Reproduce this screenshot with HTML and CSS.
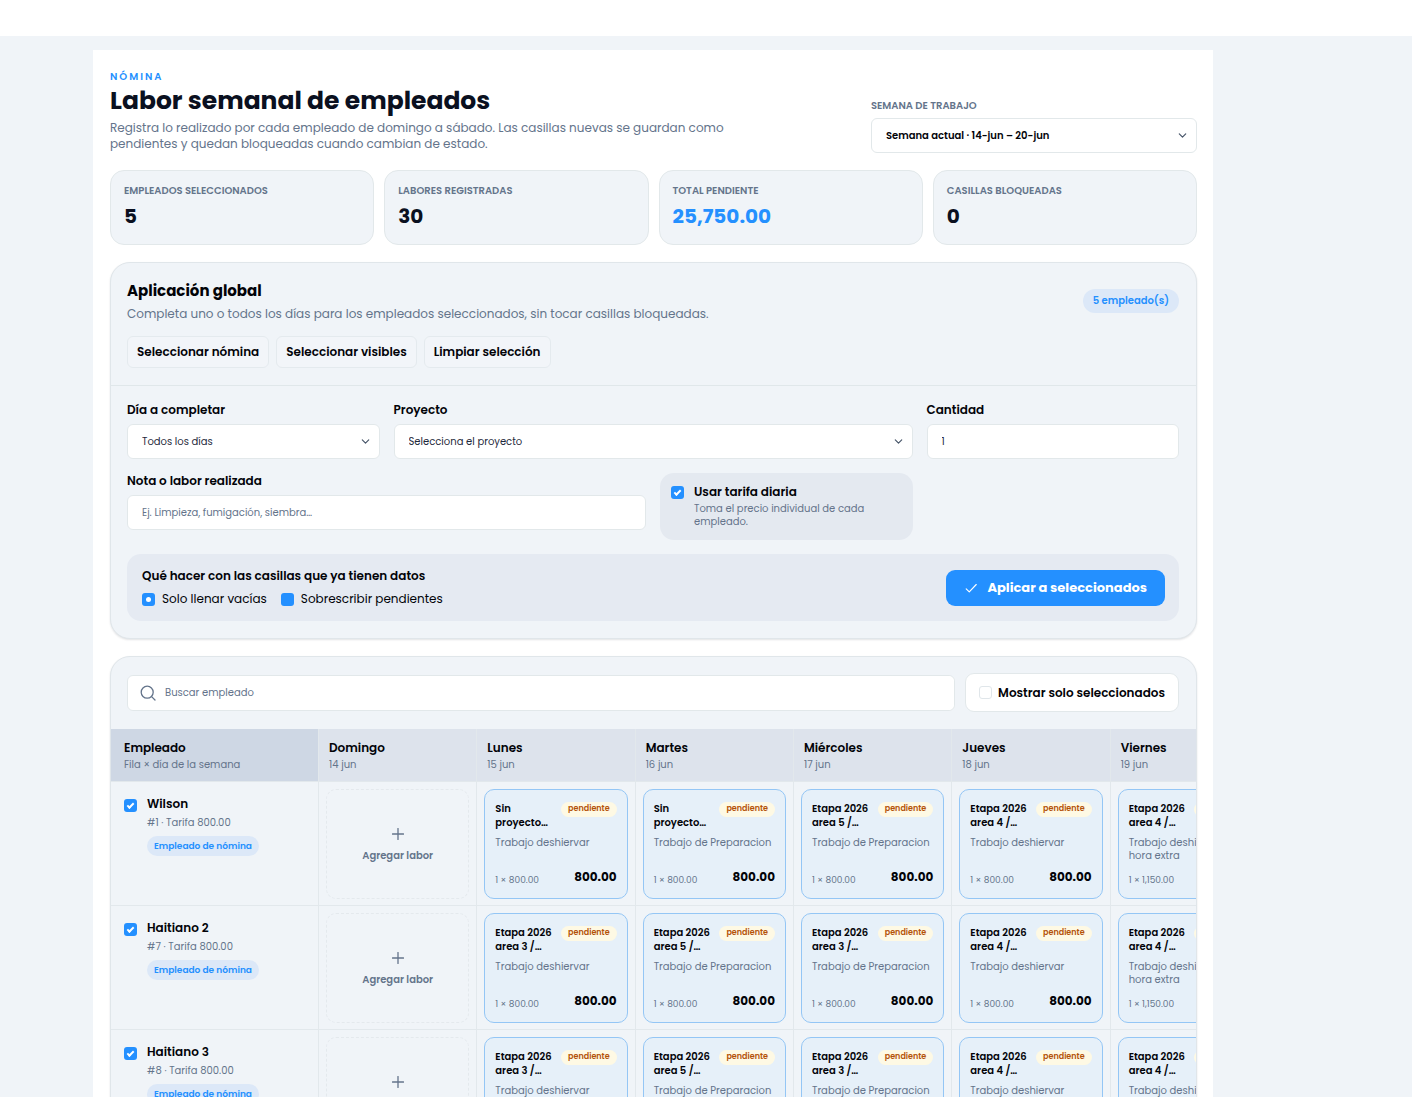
FILE: index.html
```html
<!DOCTYPE html>
<html lang="es">
<head>
    <meta charset="UTF-8" />
    <meta name="viewport" content="width=device-width, initial-scale=1">
    <title>Labor semanal de empleados</title>
    <link rel="stylesheet" href="styles.css">
</head>
<body>
    <svg class="sprite" aria-hidden="true">
        <symbol id="chevron" viewBox="0 0 12 12"><path d="M2.5 4.2 6 7.7l3.5-3.5"/></symbol>
        <symbol id="check" viewBox="0 0 16 16"><path d="M2.5 9 6 12.5l8-8.5"/></symbol>
        <symbol id="search" viewBox="0 0 16 16"><circle cx="7.2" cy="7.2" r="6"/><path d="m11.6 11.6 3.4 3.4"/></symbol>
        <symbol id="plus" viewBox="0 0 12 12"><path d="M6 .5v11M.5 6h11"/></symbol>
    </svg>
    <header class="topbar"></header>
    <main class="page">
        <div class="panel">
            <div class="head">
                <div class="head-text">
                    <p class="eyebrow">NÓMINA</p>
                    <h1>Labor semanal de empleados</h1>
                    <p class="lead">Registra lo realizado por cada empleado de domingo a sábado. Las casillas nuevas se guardan como pendientes y quedan bloqueadas cuando cambian de estado.</p>
                </div>
                <div class="week">
                    <label class="caption" for="semana">SEMANA DE TRABAJO</label>
                    <div class="select">
                        <select id="semana" class="strong"><option>Semana actual · 14-jun – 20-jun</option></select>
                        <svg class="icon chevron"><use href="#chevron"/></svg>
                    </div>
                </div>
            </div>

            <div class="stats">
                <div class="stat"><p class="caption">EMPLEADOS SELECCIONADOS</p><p class="value">5</p></div>
                <div class="stat"><p class="caption">LABORES REGISTRADAS</p><p class="value">30</p></div>
                <div class="stat"><p class="caption">TOTAL PENDIENTE</p><p class="value blue">25,750.00</p></div>
                <div class="stat"><p class="caption">CASILLAS BLOQUEADAS</p><p class="value">0</p></div>
            </div>

            <!-- aplicación global -->
            <section class="box">
                <div class="box-head">
                    <div>
                        <h2>Aplicación global</h2>
                        <p class="sub">Completa uno o todos los días para los empleados seleccionados, sin tocar casillas bloqueadas.</p>
                        <div class="actions">
                            <button type="button" class="btn">Seleccionar nómina</button>
                            <button type="button" class="btn">Seleccionar visibles</button>
                            <button type="button" class="btn">Limpiar selección</button>
                        </div>
                    </div>
                    <span class="count">5 empleado(s)</span>
                </div>
                <form class="form">
                    <div class="field">
                        <label for="dia">Día a completar</label>
                        <div class="select">
                            <select id="dia"><option>Todos los días</option></select>
                            <svg class="icon chevron"><use href="#chevron"/></svg>
                        </div>
                    </div>
                    <div class="field wide">
                        <label for="proyecto">Proyecto</label>
                        <div class="select">
                            <select id="proyecto"><option>Selecciona el proyecto</option></select>
                            <svg class="icon chevron"><use href="#chevron"/></svg>
                        </div>
                    </div>
                    <div class="field">
                        <label for="cantidad">Cantidad</label>
                        <input type="text" id="cantidad" inputmode="decimal" value="1">
                    </div>
                    <div class="field wide">
                        <label for="nota">Nota o labor realizada</label>
                        <input type="text" id="nota" placeholder="Ej. Limpieza, fumigación, siembra…">
                    </div>
                    <label class="rate">
                        <input type="checkbox" checked>
                        <span>
                            <b>Usar tarifa diaria</b>
                            <small>Toma el precio individual de cada empleado.</small>
                        </span>
                    </label>
                    <div class="apply">
                        <fieldset>
                            <legend>Qué hacer con las casillas que ya tienen datos</legend>
                            <label><input type="radio" name="modo" checked>Solo llenar vacías</label>
                            <label><input type="radio" name="modo">Sobrescribir pendientes</label>
                        </fieldset>
                        <button type="button" class="primary"><svg class="icon"><use href="#check"/></svg>Aplicar a seleccionados</button>
                    </div>
                </form>
            </section>

            <!-- tabla semanal -->
            <section class="box">
                <div class="toolbar">
                    <div class="search">
                        <svg class="icon"><use href="#search"/></svg>
                        <input type="text" placeholder="Buscar empleado" aria-label="Buscar empleado">
                    </div>
                    <label class="only"><input type="checkbox">Mostrar solo seleccionados</label>
                </div>
                <div class="scroll">
                    <table>
                        <thead>
                            <tr>
                                <th class="who">Empleado<small>Fila × día de la semana</small></th>
                                <th>Domingo<small>14 jun</small></th>
                                <th>Lunes<small>15 jun</small></th>
                                <th>Martes<small>16 jun</small></th>
                                <th>Miércoles<small>17 jun</small></th>
                                <th>Jueves<small>18 jun</small></th>
                                <th>Viernes<small>19 jun</small></th>
                            </tr>
                        </thead>
                        <tbody>
                            <tr>
                                <td class="who">
                                    <label class="person">
                                        <input type="checkbox" checked>
                                        <span><b>Wilson</b><small>#1 · Tarifa 800.00</small><i class="tag">Empleado de nómina</i></span>
                                    </label>
                                </td>
                                <td><button type="button" class="add"><svg class="icon"><use href="#plus"/></svg>Agregar labor</button></td>
                                <td><button type="button" class="card"><span class="top"><b>Sin proyecto…</b><i class="pill">pendiente</i></span><span class="note">Trabajo deshiervar</span><span class="sum"><small>1 × 800.00</small><strong>800.00</strong></span></button></td>
                                <td><button type="button" class="card"><span class="top"><b>Sin proyecto…</b><i class="pill">pendiente</i></span><span class="note">Trabajo de Preparacion</span><span class="sum"><small>1 × 800.00</small><strong>800.00</strong></span></button></td>
                                <td><button type="button" class="card"><span class="top"><b>Etapa 2026 area 5 /…</b><i class="pill">pendiente</i></span><span class="note">Trabajo de Preparacion</span><span class="sum"><small>1 × 800.00</small><strong>800.00</strong></span></button></td>
                                <td><button type="button" class="card"><span class="top"><b>Etapa 2026 area 4 /…</b><i class="pill">pendiente</i></span><span class="note">Trabajo deshiervar</span><span class="sum"><small>1 × 800.00</small><strong>800.00</strong></span></button></td>
                                <td><button type="button" class="card"><span class="top"><b>Etapa 2026 area 4 /…</b><i class="pill">pendiente</i></span><span class="note">Trabajo deshiervar<br>hora extra</span><span class="sum"><small>1 × 1,150.00</small><strong>1,150.00</strong></span></button></td>
                            </tr>
                            <tr>
                                <td class="who">
                                    <label class="person">
                                        <input type="checkbox" checked>
                                        <span><b>Haitiano 2</b><small>#7 · Tarifa 800.00</small><i class="tag">Empleado de nómina</i></span>
                                    </label>
                                </td>
                                <td><button type="button" class="add"><svg class="icon"><use href="#plus"/></svg>Agregar labor</button></td>
                                <td><button type="button" class="card"><span class="top"><b>Etapa 2026 area 3 /…</b><i class="pill">pendiente</i></span><span class="note">Trabajo deshiervar</span><span class="sum"><small>1 × 800.00</small><strong>800.00</strong></span></button></td>
                                <td><button type="button" class="card"><span class="top"><b>Etapa 2026 area 5 /…</b><i class="pill">pendiente</i></span><span class="note">Trabajo de Preparacion</span><span class="sum"><small>1 × 800.00</small><strong>800.00</strong></span></button></td>
                                <td><button type="button" class="card"><span class="top"><b>Etapa 2026 area 3 /…</b><i class="pill">pendiente</i></span><span class="note">Trabajo de Preparacion</span><span class="sum"><small>1 × 800.00</small><strong>800.00</strong></span></button></td>
                                <td><button type="button" class="card"><span class="top"><b>Etapa 2026 area 4 /…</b><i class="pill">pendiente</i></span><span class="note">Trabajo deshiervar</span><span class="sum"><small>1 × 800.00</small><strong>800.00</strong></span></button></td>
                                <td><button type="button" class="card"><span class="top"><b>Etapa 2026 area 4 /…</b><i class="pill">pendiente</i></span><span class="note">Trabajo deshiervar<br>hora extra</span><span class="sum"><small>1 × 1,150.00</small><strong>1,150.00</strong></span></button></td>
                            </tr>
                            <tr>
                                <td class="who">
                                    <label class="person">
                                        <input type="checkbox" checked>
                                        <span><b>Haitiano 3</b><small>#8 · Tarifa 800.00</small><i class="tag">Empleado de nómina</i></span>
                                    </label>
                                </td>
                                <td><button type="button" class="add"><svg class="icon"><use href="#plus"/></svg>Agregar labor</button></td>
                                <td><button type="button" class="card"><span class="top"><b>Etapa 2026 area 3 /…</b><i class="pill">pendiente</i></span><span class="note">Trabajo deshiervar</span><span class="sum"><small>1 × 800.00</small><strong>800.00</strong></span></button></td>
                                <td><button type="button" class="card"><span class="top"><b>Etapa 2026 area 5 /…</b><i class="pill">pendiente</i></span><span class="note">Trabajo de Preparacion</span><span class="sum"><small>1 × 800.00</small><strong>800.00</strong></span></button></td>
                                <td><button type="button" class="card"><span class="top"><b>Etapa 2026 area 3 /…</b><i class="pill">pendiente</i></span><span class="note">Trabajo de Preparacion</span><span class="sum"><small>1 × 800.00</small><strong>800.00</strong></span></button></td>
                                <td><button type="button" class="card"><span class="top"><b>Etapa 2026 area 4 /…</b><i class="pill">pendiente</i></span><span class="note">Trabajo deshiervar</span><span class="sum"><small>1 × 800.00</small><strong>800.00</strong></span></button></td>
                                <td><button type="button" class="card"><span class="top"><b>Etapa 2026 area 4 /…</b><i class="pill">pendiente</i></span><span class="note">Trabajo deshiervar<br>hora extra</span><span class="sum"><small>1 × 1,150.00</small><strong>1,150.00</strong></span></button></td>
                            </tr>
                        </tbody>
                    </table>
                </div>
            </section>
        </div>
    </main>
</body>
</html>
```
FILE: styles.css
```css
*{
    margin:0;
    padding:0;
    box-sizing: border-box;
}
body{
    display: flex;
    flex-direction: column;
    height: 100vh;
    overflow: hidden;
    background-color: #f0f4f8;
    color: #020308;
    font-family: Poppins, Inter, sans-serif;
    font-size: 12px;
    line-height: 16px;
}
button,input,select{
    font-family: inherit;
    font-size: inherit;
    line-height: inherit;
    color: inherit;
}
b,label,th,legend{
    font-weight: 600;
}
i{
    font-style: normal;
}
small{
    display: block;
    font-size: 10px;
    font-weight: 400;
    color: #64748b;
}
.sprite{
    display: none;
}
.icon{
    width: 16px;
    height: 16px;
    flex: none;
    fill: none;
    stroke: currentColor;
    stroke-width: 1.3;
    stroke-linecap: round;
    stroke-linejoin: round;
}
.topbar{
    flex: none;
    height: 36px;
    background-color: #fff;
}
.page{
    flex: 1;
    min-height: 0;
    overflow-y: auto;
    scrollbar-width: none;
    padding: 14px 93px 14px;
}
.panel{
    max-width: 1120px;
    padding: 19px 16px 18px 17px;
    background-color: #fff;
}

/*encabezado*/
.head{
    display: flex;
    justify-content: space-between;
    align-items: flex-end;
}
.head-text{
    max-width: 620px;
}
.eyebrow{
    font-size: 10px;
    font-weight: 600;
    letter-spacing: 2px;
    color: #2490ff;
}
h1{
    font-size: 25px;
    line-height: 32px;
    font-weight: 700;
    color: #0a1020;
}
.lead{
    margin: 3px 0 1px;
    color: #64748b;
}
.caption{
    display: block;
    font-size: 10px;
    font-weight: 600;
    color: #64748b;
}
.week{
    width: 30%;
}
.week .select{
    margin-top: 4px;
}
.select{
    position: relative;
}
select,
input[type=text]{
    display: block;
    width: 100%;
    height: 35px;
    padding: 0 14px;
    border: 1px solid #e2e8ea;
    border-radius: 6px;
    background-color: #fff;
    font-size: 10px;
    color: #1e293b;
    appearance: none;
}
select.strong{
    font-weight: 600;
    color: #020308;
}
input::placeholder{
    color: #64748b;
}
.chevron{
    position: absolute;
    right: 9px;
    top: 12px;
    width: 11px;
    height: 11px;
    color: #475569;
}

/*resumen*/
.stats{
    display: grid;
    grid-template-columns: repeat(4, 1fr);
    gap: 10px;
    margin-top: 17px;
}
.stat{
    padding: 12px 13px 16px;
    border: 1px solid #e2e8ea;
    border-radius: 14px;
    background-color: #f0f4f8;
}
.value{
    margin-top: 5px;
    font-size: 20px;
    line-height: 24px;
    font-weight: 700;
    color: #0a1020;
}
.blue{
    color: #2490ff;
}

/*cajas*/
.box{
    margin-top: 17px;
    border: 1px solid #e0e6ea;
    border-radius: 20px;
    background-color: #f0f4f8;
    box-shadow: 0 1px 2px rgba(15,23,42,.12);
    overflow: hidden;
}
.box-head{
    display: flex;
    justify-content: space-between;
    align-items: flex-start;
    padding: 16px 17px 17px 16px;
    border-bottom: 1px solid #e0e7ea;
}
h2{
    font-size: 15px;
    line-height: 24px;
    font-weight: 700;
}
.sub{
    margin-top: 3px;
    color: #64748b;
}
.actions{
    display: flex;
    gap: 7px;
    margin-top: 14px;
}
.btn{
    height: 32px;
    padding: 0 9px;
    border: 1px solid #e4eaee;
    border-radius: 6px;
    background-color: #f2f5f9;
    font-weight: 600;
}
.count{
    margin-top: 10px;
    padding: 4px 10px;
    border-radius: 12px;
    background-color: #dce8f8;
    font-size: 10px;
    font-weight: 600;
    color: #2490ff;
}
.form{
    display: grid;
    grid-template-columns: repeat(4, 1fr);
    gap: 14px;
    padding: 16px 17px 17px 16px;
}
.wide{
    grid-column: span 2;
}
.field label{
    display: block;
    margin-bottom: 6px;
}
.rate{
    display: flex;
    gap: 10px;
    padding: 11px 11px 12px;
    border-radius: 14px;
    background-color: #e4e9f0;
}
.rate b{
    display: block;
}
.rate small{
    line-height: 13px;
    margin-top: 2px;
}
.apply{
    grid-column: 1 / -1;
    display: flex;
    justify-content: space-between;
    align-items: center;
    padding: 14px 14px 14px 15px;
    border-radius: 14px;
    background-color: #e5eaf2;
}
fieldset{
    display: flex;
    gap: 14px;
    border: 0;
}
legend{
    margin-bottom: 7px;
}
fieldset label{
    display: flex;
    align-items: center;
    gap: 7px;
    font-weight: 400;
}
input[type=checkbox],
input[type=radio]{
    display: grid;
    place-items: center;
    flex: none;
    width: 13px;
    height: 13px;
    border-radius: 3px;
    background-color: #2490ff;
    appearance: none;
}
input[type=checkbox]{
    margin-top: 2px;
}
input[type=checkbox]:checked::after{
    content: "";
    width: 5px;
    height: 2px;
    margin-bottom: 2px;
    border: solid #fff;
    border-width: 0 0 2px 2px;
    transform: rotate(-45deg);
}
input[type=radio]:checked::after{
    content: "";
    width: 5px;
    height: 5px;
    border-radius: 50%;
    background-color: #fff;
}
.primary{
    display: flex;
    align-items: center;
    gap: 8px;
    height: 36px;
    padding: 0 18px 0 17px;
    border: 0;
    border-radius: 9px;
    background-color: #2490ff;
    font-size: 13px;
    font-weight: 700;
    color: #fff;
}
.primary .icon{
    padding: 1px;
}

/*buscador*/
.toolbar{
    display: flex;
    align-items: center;
    gap: 10px;
    padding: 16px 17px 17px 16px;
}
.search{
    flex: 1;
    display: flex;
    align-items: center;
    height: 36px;
    padding-left: 12px;
    border: 1px solid #e2e8ea;
    border-radius: 6px;
    background-color: #fff;
    color: #64748b;
}
.search input[type=text]{
    height: 34px;
    padding: 0 9px;
    border: 0;
}
.only{
    display: flex;
    align-items: center;
    gap: 6px;
    height: 39px;
    padding: 0 13px;
    border: 1px solid #e2e8ea;
    border-radius: 9px;
    background-color: #fff;
}
.only input[type=checkbox]{
    margin: 0;
    border: 1px solid #e0e6ea;
    background-color: #fff;
}

/*tabla*/
.scroll{
    overflow-x: auto;
    scrollbar-width: none;
}
table{
    width: 100%;
    min-width: 1158px;
    table-layout: fixed;
    border-collapse: separate;
    border-spacing: 0;
}
th,td{
    border-right: 1px solid #e2e8ec;
    border-bottom: 1px solid #e2e8ec;
    text-align: left;
    vertical-align: top;
}
th{
    height: 53px;
    padding: 11px 10px 8px;
    background-color: #dde3ec;
}
th small{
    margin-top: 1px;
}
th.who{
    width: 208px;
    padding-left: 13px;
    background-color: #ced7e4;
}
td{
    padding: 7px 7px 6px;
}
td.who{
    padding: 14px 13px;
}
.person{
    display: flex;
    gap: 10px;
}
.person input[type=checkbox]{
    margin-top: 3px;
}
.person b{
    display: block;
}
.person small{
    margin-top: 3px;
}
.tag{
    display: inline-block;
    margin-top: 5px;
    padding: 2px 7px;
    border-radius: 10px;
    background-color: #dce8f8;
    font-size: 9px;
    font-weight: 600;
    color: #2490ff;
}
.add,.card{
    display: flex;
    flex-direction: column;
    width: 100%;
    height: 110px;
    border-radius: 10px;
}
.add{
    align-items: center;
    justify-content: center;
    gap: 8px;
    padding-top: 3px;
    border: 1px dashed #e4e9ed;
    background-color: transparent;
    font-size: 10px;
    font-weight: 600;
    color: #64748b;
}
.add .icon{
    width: 12px;
    height: 12px;
}
.card{
    padding: 12px 10px 11px;
    border: 1px solid #94c6f5;
    background-color: #e6f0f9;
    text-align: left;
}
.top{
    display: flex;
    justify-content: space-between;
    align-items: flex-start;
    width: 100%;
    font-size: 10px;
    line-height: 14px;
}
.top b{
    width: 62px;
}
.pill{
    flex: none;
    padding: 0 7px 1px;
    border-radius: 8px;
    background-color: #fef9e4;
    font-size: 8px;
    font-weight: 600;
    color: #b45309;
}
.note{
    margin-top: 6px;
    font-size: 10px;
    line-height: 13px;
    color: #64748b;
}
.sum{
    display: flex;
    justify-content: space-between;
    align-items: flex-end;
    width: 100%;
    margin-top: auto;
}
.sum small{
    font-size: 9px;
    line-height: 13px;
}
.sum strong{
    font-weight: 700;
    line-height: 20px;
}
```
